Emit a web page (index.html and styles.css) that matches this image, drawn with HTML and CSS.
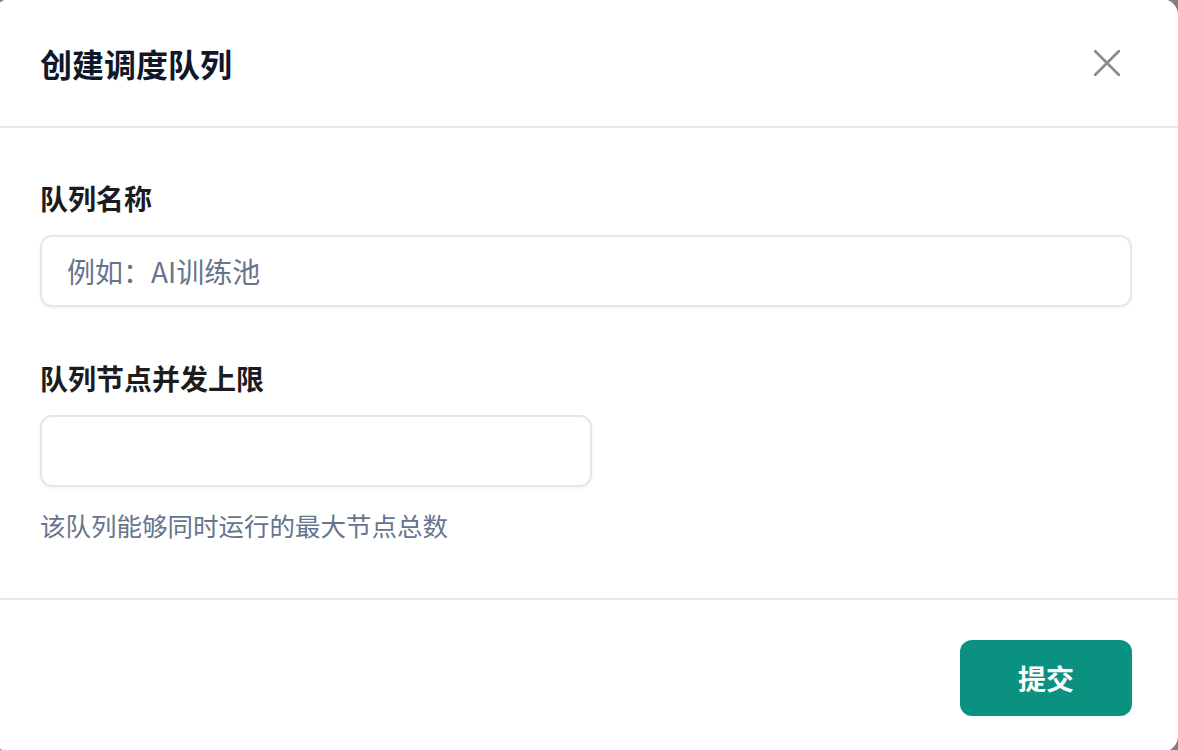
FILE: index.html
```html
<!DOCTYPE html>
<html lang="zh-CN">
<head>
<meta charset="utf-8">
<title>创建调度队列</title>
<link rel="stylesheet" href="styles.css">
</head>
<body>
<div class="modal">
  <div class="modal-header">
    <h2 class="modal-title">创建调度队列</h2>
    <button class="close-btn" aria-label="关闭">
      <svg width="26" height="26" viewBox="0 0 26 26"><path d="M1 1L25 25M25 1L1 25" stroke="#8a8a8a" stroke-width="2.6" stroke-linecap="round" fill="none"/></svg>
    </button>
  </div>
  <div class="modal-body">
    <div class="field">
      <label class="field-label">队列名称</label>
      <input class="field-input" type="text" placeholder="例如：AI训练池">
    </div>
    <div class="field field-second">
      <label class="field-label">队列节点并发上限</label>
      <input class="field-input field-input-half" type="text">
      <p class="field-help">该队列能够同时运行的最大节点总数</p>
    </div>
  </div>
  <div class="modal-footer">
    <button class="submit-btn">提交</button>
  </div>
</div>
</body>
</html>
```

FILE: styles.css
```css
* { box-sizing: border-box; }
html, body {
  margin: 0;
  padding: 0;
  height: 100%;
  overflow: hidden;
}
body {
  background: #7f7f7f;
  font-family: "Noto Sans CJK SC", "Noto Sans", "Liberation Sans", sans-serif;
}
.modal {
  margin: -1px 0 0 -6px;
  width: 1184px;
  height: 753px;
  background: #ffffff;
  border-radius: 16px;
  display: flex;
  flex-direction: column;
}
.modal-header {
  height: 129px;
  padding: 0 58px 0 46px;
  display: flex;
  align-items: center;
  justify-content: space-between;
  border-bottom: 2px solid #e3e7ef;
}
.modal-title {
  margin: 0;
  font-size: 32px;
  font-weight: 700;
  color: #0f172a;
  line-height: 40px;
}
.close-btn {
  border: 0;
  background: none;
  padding: 0;
  width: 26px;
  height: 26px;
  display: flex;
  cursor: pointer;
}
.modal-body {
  padding: 50px 46px 55px 46px;
  border-bottom: 2px solid #e3e7ef;
}
.field {
  display: flex;
  flex-direction: column;
}
.field-second {
  margin-top: 51px;
}
.field-label {
  font-size: 28px;
  line-height: 40px;
  font-weight: 600;
  color: #1c1c1e;
  margin-bottom: 17px;
}
.field-input {
  height: 72px;
  width: 100%;
  border: 2px solid #e2e8f0;
  border-radius: 12px;
  padding: 0 25px;
  font-family: inherit;
  font-size: 28px;
  color: #1f2937;
  background: #ffffff;
  box-shadow: 0 1px 3px rgba(15, 23, 42, 0.06);
  outline: none;
}
.field-input::placeholder {
  color: #66758d;
}
.field-input-half {
  width: 552px;
}
.field-help {
  margin: 20px 0 0 0;
  font-size: 25.5px;
  line-height: 36px;
  color: #66758d;
}
.modal-footer {
  padding: 40px 46px 0 46px;
  display: flex;
  justify-content: flex-end;
}
.submit-btn {
  width: 172px;
  height: 76px;
  border: 0;
  border-radius: 12px;
  background: #0b917f;
  color: #ffffff;
  font-family: inherit;
  font-size: 28px;
  font-weight: 700;
  cursor: pointer;
}
```
